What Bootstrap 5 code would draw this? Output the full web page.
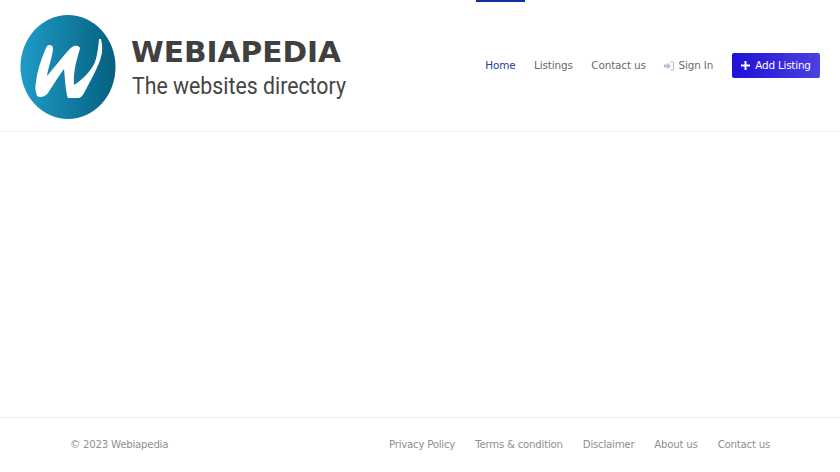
<!DOCTYPE html>
<html lang="en">
<head>
  <meta charset="UTF-8" />
  <title>Webiapedia - The websites directory</title>
  <meta name="viewport" content="width=device-width, initial-scale=1" />
  <link href="https://cdn.jsdelivr.net/npm/bootstrap@5.3.0/dist/css/bootstrap.min.css" rel="stylesheet" />
  <style>
    body {
      background: #fff;
      font-family: "DejaVu Sans", sans-serif;
      font-size: 10px;
      height: 472px;
      overflow: hidden;
    }
    .site-header {
      height: 132px;
      border-bottom: 1px solid #eeeff1;
      padding-right: 20px;
    }
    .site-logo {
      width: 400px;
      height: 131px;
      display: block;
    }
    .logo-name {
      font-family: "DejaVu Sans", sans-serif;
      font-weight: 700;
      font-size: 28.8px;
      fill: #404040;
    }
    .logo-tag {
      font-family: Roboto, sans-serif;
      font-size: 23px;
      fill: #454545;
    }
    .main-menu .nav-link {
      height: 100%;
      padding: 0 9.3px;
      color: #666a71;
      font-size: 10.4px;
      letter-spacing: -0.12px;
      display: flex;
      align-items: center;
      gap: 4px;
      border-top: 2px solid transparent;
      border-bottom: 2px solid transparent;
    }
    .main-menu .nav-link.active {
      color: #1a3fa8;
      border-top-color: #10309f;
    }
    .signin-icon {
      width: 10px;
      height: 10px;
    }
    .add-btn {
      margin-left: 9.5px;
      width: 88px;
      height: 25px;
      padding: 0;
      font-size: 10.4px;
      letter-spacing: -0.2px;
      color: #fff;
      border: 0;
      border-radius: 2px;
      background: linear-gradient(90deg, #2010d6, #4b40e2);
      gap: 5px;
    }
    .add-btn:hover {
      color: #fff;
    }
    .page-body {
      height: 285px;
    }
    .site-footer {
      height: 55px;
      border-top: 1px solid #eeeff1;
      padding: 0 70px;
      color: #8d9096;
      font-size: 10.2px;
      letter-spacing: -0.23px;
    }
    .site-footer a {
      color: #8d9096;
      text-decoration: none;
    }
    .footer-links {
      gap: 20px;
    }
  </style>
</head>
<body>
  <header class="site-header d-flex justify-content-between">
    <a href="#" class="d-block text-decoration-none">
      <svg class="site-logo" viewBox="0 0 400 131" xmlns="http://www.w3.org/2000/svg">
        <defs>
          <linearGradient id="logoFill" x1="0" x2="1" y1="0" y2="0">
            <stop offset="0" stop-color="#1f9bc8" />
            <stop offset="1" stop-color="#04607f" />
          </linearGradient>
        </defs>
        <ellipse cx="68" cy="67" rx="47.5" ry="52" fill="url(#logoFill)" />
        <path fill="#fff" d="M47,46 C49,44 53,45 53,48 C53,55 48,68 47,76 C54,68 66,52 72,47 C75,45 80,45 80,49 C77,58 73,72 74,85 C82,80 92,70 95,62 C97,56 98,50 99,39 L101,39 L102,45 C103,54 100,62 93,76 L84,93 C82,97 80,98 78,98 L68,98 C66,94 65,80 64,69 C58,77 52,87 48,93 C45,97 40,98 37,96 C35,90 35,86 36,82 C37,72 42,56 47,46 Z" />
        <text class="logo-name" x="131" y="62" textLength="210" lengthAdjust="spacingAndGlyphs">WEBIAPEDIA</text>
        <text class="logo-tag" x="132" y="93.5" textLength="214" lengthAdjust="spacingAndGlyphs">The websites directory</text>
      </svg>
    </a>
    <ul class="nav main-menu align-items-stretch">
      <li class="nav-item"><a class="nav-link active" href="#">Home</a></li>
      <li class="nav-item"><a class="nav-link" href="#">Listings</a></li>
      <li class="nav-item"><a class="nav-link" href="#">Contact us</a></li>
      <li class="nav-item">
        <a class="nav-link" href="#">
          <svg class="signin-icon" viewBox="0 0 10 10" xmlns="http://www.w3.org/2000/svg">
            <path fill="#b9c1d6" d="M0,3.6 H3.4 V1.4 L7,5 L3.4,8.6 V6.4 H0 Z" />
            <path fill="none" stroke="#b9c1d6" stroke-width="1" d="M6,1 H9.4 V9 H6" />
          </svg>
          Sign In
        </a>
      </li>
      <li class="nav-item d-flex align-items-center">
        <a class="btn add-btn d-flex align-items-center justify-content-center" href="#">
          <svg width="9" height="9" viewBox="0 0 9 9" xmlns="http://www.w3.org/2000/svg">
            <path fill="#fff" d="M3.5,0 H5.5 V3.5 H9 V5.5 H5.5 V9 H3.5 V5.5 H0 V3.5 H3.5 Z" />
          </svg>
          Add Listing
        </a>
      </li>
    </ul>
  </header>

  <main class="page-body"></main>

  <footer class="site-footer d-flex justify-content-between align-items-center">
    <span>© 2023 Webiapedia</span>
    <div class="d-flex footer-links">
      <a href="#">Privacy Policy</a>
      <a href="#">Terms &amp; condition</a>
      <a href="#">Disclaimer</a>
      <a href="#">About us</a>
      <a href="#">Contact us</a>
    </div>
  </footer>

  <script src="https://cdn.jsdelivr.net/npm/bootstrap@5.3.0/dist/js/bootstrap.bundle.min.js"></script>
</body>
</html>
